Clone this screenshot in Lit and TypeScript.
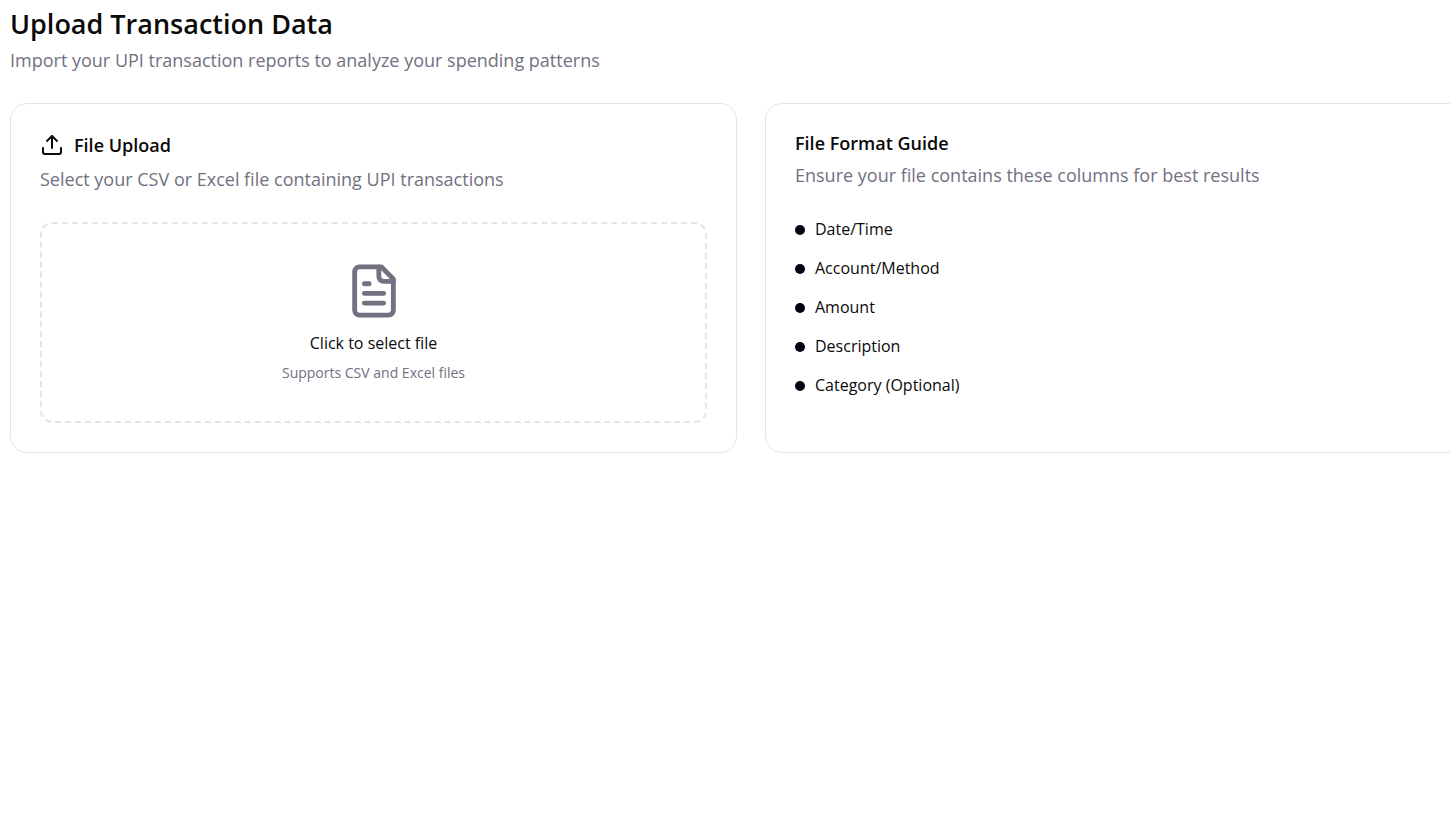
import { LitElement, html, css } from "lit";
import { customElement } from "lit/decorators.js";

const COLUMNS = ["Date/Time", "Account/Method", "Amount", "Description", "Category (Optional)"];

@customElement("app-root")
export class AppRoot extends LitElement {
  static styles = css`
    :host {
      display: block;
      overflow-x: clip;
      min-height: 100vh;
      background: #fff;
      color: #0a0a0a;
      font-family: "Segoe UI", "Open Sans", "Noto Sans", sans-serif;
      font-size: 16px;
      line-height: 29px;
    }
    * {
      box-sizing: border-box;
    }
    h1, h2, p, ul {
      margin: 0;
      padding: 0;
    }
    .page {
      display: flex;
      flex-direction: column;
      gap: 28px;
      margin: 6px -42px 0 10px;
    }
    header {
      display: flex;
      flex-direction: column;
      gap: 4px;
    }
    h1 {
      font-size: 27px;
      font-weight: 600;
      line-height: 36px;
    }
    .muted {
      color: #717182;
      font-size: 18px;
    }
    .cards {
      display: grid;
      grid-template-columns: 1fr 1fr;
      gap: 28px;
    }
    .card {
      display: flex;
      flex-direction: column;
      gap: 28px;
      padding: 29px;
      border: 1px solid #e5e5e5;
      border-radius: 17px;
    }
    .head {
      display: flex;
      flex-direction: column;
      gap: 8px;
    }
    h2 {
      display: flex;
      align-items: center;
      gap: 10px;
      font-size: 18px;
      font-weight: 600;
      line-height: 20px;
    }
    svg {
      display: block;
      flex: none;
      fill: none;
      stroke: currentColor;
      stroke-width: 2;
      stroke-linecap: round;
      stroke-linejoin: round;
    }
    .drop {
      display: flex;
      flex-direction: column;
      align-items: center;
      padding: 38px;
      border: 2px dashed #e5e5e5;
      border-radius: 12px;
      text-align: center;
      cursor: pointer;
    }
    .drop svg {
      color: #717182;
      margin-bottom: 9px;
    }
    .hint {
      margin-top: 5px;
      color: #717182;
      font-size: 14px;
      line-height: 20px;
    }
    .file {
      position: absolute;
      width: 1px;
      height: 1px;
      opacity: 0;
      overflow: hidden;
    }
    .drop:focus-within {
      border-color: #717182;
    }
    ul {
      display: flex;
      flex-direction: column;
      gap: 16px;
      list-style: none;
    }
    li {
      display: flex;
      align-items: center;
      gap: 10px;
      line-height: 23px;
    }
    .dot {
      width: 10px;
      height: 10px;
      border-radius: 50%;
      background: #030213;
    }
  `;

  render() {
    return html`
      <main class="page">
        <header>
          <h1>Upload Transaction Data</h1>
          <p class="muted">Import your UPI transaction reports to analyze your spending patterns</p>
        </header>
        <div class="cards">
          <section class="card">
            <div class="head">
              <h2>
                <svg width="24" height="24" viewBox="0 0 24 24" aria-hidden="true">
                  <path d="M12 3v12" />
                  <path d="m17 8-5-5-5 5" />
                  <path d="M21 15v4a2 2 0 0 1-2 2H5a2 2 0 0 1-2-2v-4" />
                </svg>
                File Upload
              </h2>
              <p class="muted">Select your CSV or Excel file containing UPI transactions</p>
            </div>
            <label class="drop" for="file">
              <input class="file" id="file" type="file" accept=".csv,.xls,.xlsx" />
              <svg width="58" height="58" viewBox="0 0 24 24" aria-hidden="true">
                <path d="M15 2H6a2 2 0 0 0-2 2v16a2 2 0 0 0 2 2h12a2 2 0 0 0 2-2V7Z" />
                <path d="M14 2v4a2 2 0 0 0 2 2h4" />
                <path d="M10 9H8" />
                <path d="M16 13H8" />
                <path d="M16 17H8" />
              </svg>
              <span>Click to select file</span>
              <span class="hint">Supports CSV and Excel files</span>
            </label>
          </section>
          <section class="card">
            <div class="head">
              <h2>File Format Guide</h2>
              <p class="muted">Ensure your file contains these columns for best results</p>
            </div>
            <ul>
              ${COLUMNS.map((name) => html`<li><span class="dot"></span>${name}</li>`)}
            </ul>
          </section>
        </div>
      </main>
    `;
  }
}
